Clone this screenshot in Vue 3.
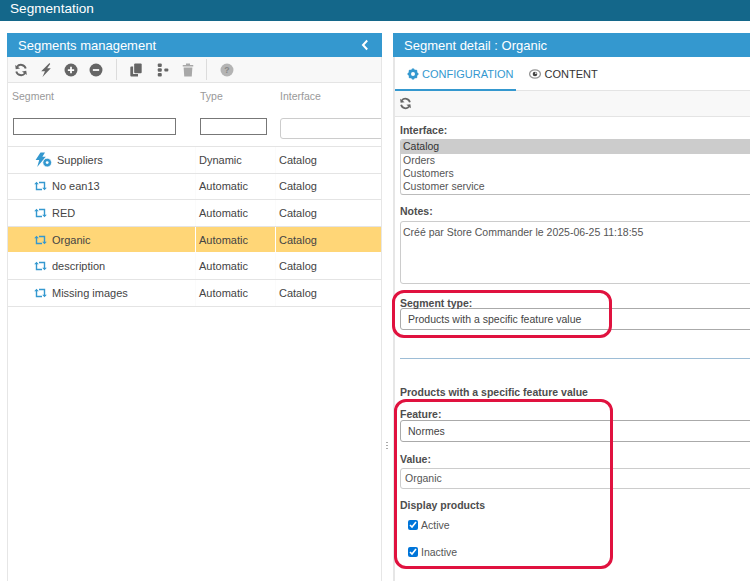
<template>
  <div class="page">
    <header class="topbar">Segmentation</header>

    <main class="layout">
      <section class="panel left">
        <div class="panel-head">
          <span>Segments management</span>
          <svg class="collapse" width="8" height="12" viewBox="0 0 8 12">
            <path d="M6.2 1.5 2 6l4.2 4.5" fill="none" stroke="#fff" stroke-width="2" />
          </svg>
        </div>

        <div class="toolbar">
          <svg class="ico" viewBox="0 0 16 16"><use href="#i-refresh" /></svg>
          <svg class="ico" viewBox="0 0 16 16"><path d="M12 0 2.500 9.400h4.300L4 16l9.500-10H9.300L12.800 1z" fill="#666" /></svg>
          <svg class="ico" viewBox="0 0 16 16">
            <circle cx="8" cy="8" r="7.400" fill="#666" />
            <path d="M4.400 8h7.200M8 4.400v7.200" stroke="#fff" stroke-width="2" />
          </svg>
          <svg class="ico" viewBox="0 0 16 16">
            <circle cx="8" cy="8" r="7.400" fill="#666" />
            <path d="M4.400 8h7.200" stroke="#fff" stroke-width="2" />
          </svg>
          <span class="sep sep-a"></span>
          <svg class="ico" viewBox="0 0 16 16">
            <path d="M7 .6h6.400c.7 0 1.100.4 1.100 1.100v9c0 .7-.4 1.100-1.100 1.100H7c-.7 0-1.100-.4-1.100-1.100v-9C5.900 1 6.300.6 7 .6z" fill="#666" />
            <path d="M4.700 4v8.700h5.600v2.700H2.600c-.7 0-1.100-.4-1.100-1.100V5.100C1.500 4.400 1.900 4 2.600 4z" fill="#666" />
          </svg>
          <svg class="ico tree" viewBox="0 0 16 16">
            <g fill="#666">
              <rect x="2" y="0.500" width="4.600" height="4" rx="1.200" />
              <rect x="2" y="6" width="4.600" height="4" rx="1.200" />
              <rect x="2" y="11.500" width="4.600" height="4" rx="1.200" />
              <rect x="9.500" y="6.200" width="4.600" height="3.600" rx="1.200" />
            </g>
          </svg>
          <svg class="ico" viewBox="0 0 16 16">
            <path d="M2 2.300h12v1.700H2zM5.700.7h4.600v1.800H5.700zM3 5h10l-.7 10.300H3.700z" fill="#a8a8a8" />
          </svg>
          <span class="sep sep-b"></span>
          <svg class="ico" viewBox="0 0 16 16">
            <circle cx="8" cy="8" r="7.400" fill="#b4b4b4" />
            <text x="8" y="11.500" class="qmark" text-anchor="middle">?</text>
          </svg>
        </div>

        <div class="grid">
          <div class="grid-head">
            <div class="col-labels">
              <span>Segment</span>
              <span>Type</span>
              <span>Interface</span>
            </div>
            <div class="filters">
              <input class="filter f1" type="text" />
              <input class="filter f2" type="text" />
              <input class="filter f3" type="text" />
            </div>
          </div>

          <div
            v-for="seg in segments"
            :key="seg.name"
            class="row"
            :class="{ selected: seg.name === 'Organic' }"
          >
            <div class="cell name" :class="{ dyn: seg.type === 'Dynamic' }">
              <svg v-if="seg.type === 'Dynamic'" width="18" height="16" viewBox="0 0 18 16">
                <path d="M6.500 0.500h4.500L8.400 4.800h3.400L3.200 15l2-7H1.600z" fill="#3498cf" />
                <circle cx="13.200" cy="10.600" r="4.400" fill="#3498cf" stroke="#fff" stroke-width="0.800" />
                <circle cx="13.200" cy="10.600" r="1.400" fill="#fff" />
              </svg>
              <svg v-else width="13" height="10" viewBox="0 0 13 10">
                <path d="M2.500 2.500V8.500H8M10.500 7.500V1.500H5" fill="none" stroke="#3498cf" stroke-width="1.400" />
                <path d="M0.200 3.200 2.500 0.800 4.800 3.200zM8.200 6.800 10.500 9.200 12.800 6.800z" fill="#3498cf" />
              </svg>
              <span>{{ seg.name }}</span>
            </div>
            <div class="cell type">{{ seg.type }}</div>
            <div class="cell iface">Catalog</div>
          </div>
        </div>
      </section>

      <div class="splitter"><span class="grip"></span></div>

      <section class="panel right">
        <div class="panel-head">Segment detail : Organic</div>

        <div class="tabs">
          <div class="tab active">
            <svg width="12" height="12" viewBox="0 0 12 12">
              <circle cx="6" cy="6" r="3.400" fill="none" stroke="#3498cf" stroke-width="2.800" />
              <path d="M6 .6v10.800M.6 6h10.800M2.200 2.200l7.600 7.600M9.800 2.200l-7.600 7.600" stroke="#3498cf" stroke-width="2.200" stroke-dasharray="2 6.800" />
            </svg>
            CONFIGURATION
          </div>
          <div class="tab">
            <svg width="12" height="10" viewBox="0 0 12 10">
              <ellipse cx="6" cy="5" rx="5.400" ry="4.200" fill="#fff" stroke="#999" stroke-width="1.300" />
              <circle cx="6" cy="5" r="2.300" fill="#444" />
              <circle cx="6.800" cy="4.200" r="0.900" fill="#ddd" />
            </svg>
            CONTENT
          </div>
        </div>

        <div class="toolbar sub">
          <svg class="ico" viewBox="0 0 16 16"><use href="#i-refresh" /></svg>
        </div>

        <form class="form" @submit.prevent>
          <label class="lbl iface-lbl">Interface:</label>
          <div class="listbox">
            <div
              v-for="(opt, i) in interfaces"
              :key="opt"
              class="opt"
              :class="{ on: i === 0 }"
            >{{ opt }}</div>
          </div>

          <label class="lbl notes-lbl">Notes:</label>
          <div class="notes">Créé par Store Commander le 2025-06-25 11:18:55</div>

          <label class="lbl type-lbl">Segment type:</label>
          <div class="select">Products with a specific feature value</div>

          <hr class="rule" />

          <div class="lbl subtitle">Products with a specific feature value</div>

          <label class="lbl feature-lbl">Feature:</label>
          <div class="select feature">Normes</div>

          <label class="lbl value-lbl">Value:</label>
          <div class="textinput">Organic</div>

          <div class="lbl display-lbl">Display products</div>
          <label class="check first"><input type="checkbox" checked /> Active</label>
          <label class="check"><input type="checkbox" checked /> Inactive</label>
        </form>

        <div class="mark mark-type"></div>
        <div class="mark mark-feature"></div>
      </section>
    </main>

    <svg width="0" height="0" class="defs">
      <defs>
        <g id="i-refresh">
          <path d="M13.400 6.400A5.700 5.700 0 0 0 3.400 4.300" fill="none" stroke="#666" stroke-width="2.200" />
          <path d="M1.600 1.800v5h5z" fill="#666" transform="rotate(-8 4 4)" />
          <path d="M2.600 9.600a5.700 5.700 0 0 0 10 2.100" fill="none" stroke="#666" stroke-width="2.200" />
          <path d="M14.400 14.200v-5h-5z" fill="#666" transform="rotate(-8 12 12)" />
        </g>
      </defs>
    </svg>
  </div>
</template>

<script setup>
const segments = [
  { name: 'Suppliers', type: 'Dynamic' },
  { name: 'No ean13', type: 'Automatic' },
  { name: 'RED', type: 'Automatic' },
  { name: 'Organic', type: 'Automatic' },
  { name: 'description', type: 'Automatic' },
  { name: 'Missing images', type: 'Automatic' },
]

const interfaces = ['Catalog', 'Orders', 'Customers', 'Customer service']
</script>

<style>
html,
body {
  margin: 0;
  height: 100%;
  overflow: hidden;
  background: #fff;
}
</style>

<style scoped>
.page {
  width: 750px;
  height: 581px;
  overflow: hidden;
  font-family: 'Liberation Sans', Arial, sans-serif;
  font-size: 11px;
  color: #444;
}

.topbar {
  height: 21px;
  padding-left: 10px;
  background: #14678a;
  color: #fff;
  font-size: 13.6px;
  line-height: 17px;
}

.layout {
  display: flex;
  height: 548px;
  margin-top: 12px;
  padding-left: 7px;
}

.panel {
  position: relative;
  flex: none;
  height: 100%;
}

.panel.left {
  width: 375px;
  border-left: 1px solid #e6e6e6;
  border-right: 1px solid #e6e6e6;
  box-sizing: border-box;
}

.panel.right {
  width: 357px;
  border-left: 2px solid #e6e6e6;
  box-sizing: border-box;
}

.panel-head {
  display: flex;
  align-items: center;
  justify-content: space-between;
  height: 24px;
  margin-left: -1px;
  padding: 0 13px 0 12px;
  background: #3498cf;
  color: #fff;
  font-size: 13px;
}

.panel.left .panel-head {
  margin-right: -1px;
  padding-left: 11px;
}

.panel.right .panel-head {
  margin-left: -2px;
  padding-left: 11px;
}

.toolbar {
  display: flex;
  align-items: center;
  gap: 11px;
  height: 26px;
  padding-left: 5.500px;
  background: #f8f8f8;
  border-bottom: 1px solid #e4e4e4;
  box-sizing: border-box;
}

.toolbar.sub {
  padding-left: 4px;
}

.toolbar.sub .ico {
  width: 13px;
  height: 13px;
}

.ico {
  width: 14px;
  height: 14px;
  flex: none;
}

.tree {
  margin-left: 2px;
}

.qmark {
  font-family: 'Liberation Sans', Arial, sans-serif;
  font-size: 10px;
  font-weight: 700;
  fill: #888;
}

.sep {
  width: 1px;
  height: 21px;
  background: #dcdcdc;
}

.sep-a {
  margin: 0 1.500px 0 2px;
}

.sep-b {
  margin: 0 1.500px 0 0;
}

.grid {
  overflow: hidden;
}

.grid-head {
  height: 64px;
  border-bottom: 1px solid #e4e4e4;
  box-sizing: border-box;
}

.col-labels {
  display: flex;
  padding-top: 7px;
  height: 13px;
  font-size: 10.500px;
  line-height: 13px;
  color: #999;
}

.col-labels span:nth-child(1) {
  width: 192px;
  padding-left: 4px;
  box-sizing: border-box;
}

.col-labels span:nth-child(2) {
  width: 80px;
}

.filters {
  display: flex;
  align-items: flex-start;
  margin-top: 15px;
  padding-left: 5px;
}

.filter {
  box-sizing: border-box;
  flex: none;
  height: 17px;
  border: 1px solid #777;
  border-radius: 0;
  padding: 0;
  background: #fff;
}

.f1 {
  width: 163px;
  margin-right: 24px;
}

.f2 {
  width: 67px;
  margin-right: 13px;
}

.f3 {
  width: 110px;
  height: 21px;
  border: 1px solid #ccc;
  border-radius: 3px;
}

.row {
  display: flex;
  height: 26.600px;
  border-bottom: 1px solid #e4e4e4;
  box-sizing: border-box;
  color: #444;
}

.cell {
  display: flex;
  align-items: center;
  box-sizing: border-box;
  border-right: 1px solid #fbfbfb;
}

.name {
  width: 188px;
  padding-left: 26px;
  gap: 5px;
}

.type {
  width: 80px;
  padding-left: 3px;
}

.iface {
  flex: 1;
  padding-left: 3px;
  border-right: 0;
}

.row.selected {
  background: #ffd677;
  border-bottom-color: #fff;
}

.row.selected .name {
  margin-left: 1px;
  width: 187px;
  padding-left: 25px;
}

.row.selected .cell {
  border-right-color: #fff;
}

.tabs {
  display: flex;
  height: 34px;
  border-bottom: 1px solid #e4e4e4;
  box-sizing: border-box;
}

.tab {
  display: flex;
  align-items: center;
  gap: 3px;
  height: 34px;
  padding: 0 7px 0 13px;
  box-sizing: border-box;
  color: #333;
  font-size: 11px;
}

.tab svg {
  flex: none;
}

.tab.active {
  padding: 1px 3px 0 12px;
  color: #3498cf;
  border-bottom: 2px solid #3498cf;
}

.form {
  padding: 7px 0 0 5px;
}

.lbl {
  display: block;
  font-weight: 700;
  font-size: 10.500px;
  line-height: 13px;
  color: #4d4d4d;
}

.listbox {
  box-sizing: border-box;
  width: 360px;
  height: 56px;
  margin-top: 2px;
  border: 1px solid #ccc;
  border-bottom-color: #bbb;
  border-radius: 3px;
  overflow: hidden;
}

.opt {
  padding-left: 2px;
  height: 13px;
  line-height: 13px;
  font-size: 10.500px;
  color: #555;
}

.opt.on {
  height: 14px;
  background: #ccc;
  color: #333;
}

.notes-lbl {
  margin-top: 10px;
}

.notes {
  box-sizing: border-box;
  width: 360px;
  height: 63px;
  margin-top: 3px;
  padding: 4px 2px;
  border: 1px solid #ccc;
  border-radius: 3px;
  font-size: 10.500px;
  line-height: 13px;
  color: #555;
}

.type-lbl {
  margin-top: 13px;
}

.select {
  box-sizing: border-box;
  width: 360px;
  height: 22px;
  margin-top: -2px;
  padding-left: 7px;
  border: 1px solid #aaa;
  border-radius: 3px;
  line-height: 21px;
  font-size: 10.500px;
  color: #444;
}

.select.feature {
  margin-top: -1px;
}

.rule {
  width: 360px;
  margin: 28px 0 0;
  border: 0;
  border-top: 1px solid #9dbdd6;
}

.subtitle {
  margin-top: 27px;
}

.feature-lbl {
  margin-top: 9px;
}

.value-lbl {
  margin-top: 11px;
}

.textinput {
  box-sizing: border-box;
  width: 360px;
  height: 21px;
  margin-top: 2px;
  padding-left: 4px;
  border: 1px solid #ccc;
  border-radius: 3px;
  line-height: 19px;
  font-size: 10.500px;
  color: #555;
}

.display-lbl {
  margin-top: 10px;
}

.check {
  display: flex;
  align-items: center;
  gap: 3px;
  height: 13px;
  margin-left: 8px;
  margin-top: 14px;
  font-size: 10.500px;
  color: #555;
}

.check.first {
  margin-top: 6px;
}

.check input {
  width: 10px;
  height: 10px;
  margin: 0;
  accent-color: #0075d9;
}

.splitter {
  position: relative;
  flex: none;
  width: 11px;
}

.grip {
  position: absolute;
  left: 4px;
  top: 409px;
  width: 2px;
  height: 8px;
  background: repeating-linear-gradient(#aaa 0 1.500px, transparent 1.500px 3px);
}

.mark {
  position: absolute;
  box-sizing: border-box;
  border: 3px solid #e0123f;
  border-radius: 12px;
  pointer-events: none;
}

.mark-type {
  left: -3px;
  top: 257px;
  width: 220px;
  height: 48px;
}

.mark-feature {
  left: -1px;
  top: 366px;
  width: 219px;
  height: 170px;
}

.defs {
  position: absolute;
}
</style>
